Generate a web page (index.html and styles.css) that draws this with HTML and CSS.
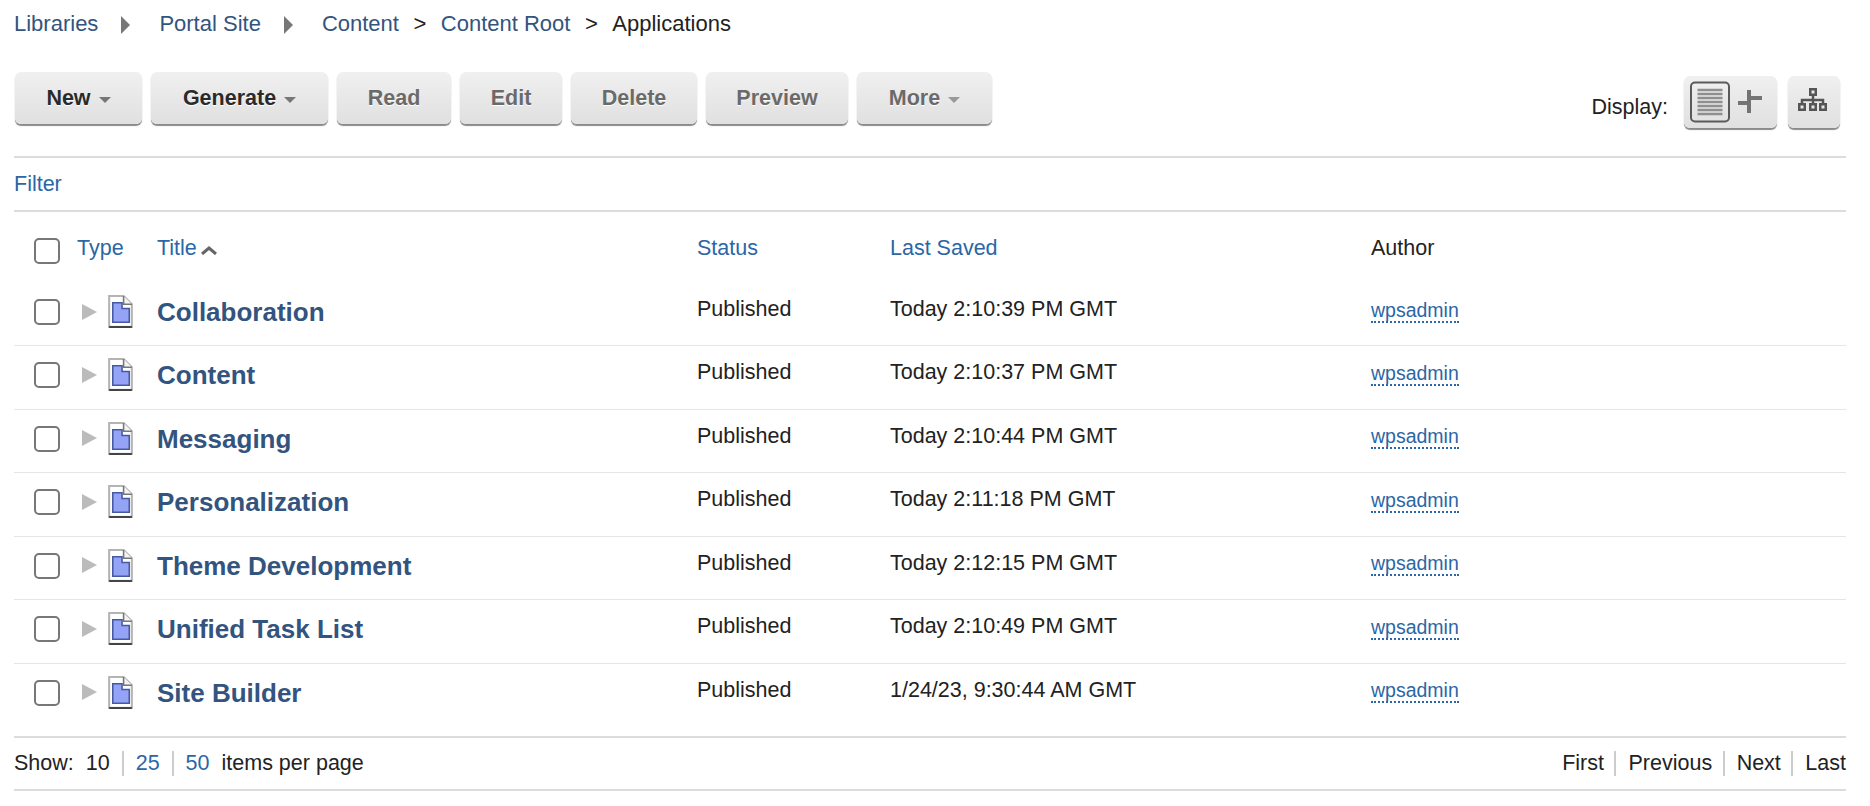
FILE: index.html
```html
<!DOCTYPE html>
<html lang="en">
<head>
<meta charset="UTF-8">
<meta name="viewport" content="width=device-width, initial-scale=1.0">
<title>Applications</title>
<link rel="stylesheet" href="styles.css">
</head>
<body>
<svg class="defs" width="0" height="0">
    <symbol id="doc" viewBox="0 0 24 32">
        <path d="M1 1H15L23 9V31H1Z" fill="#fff" stroke="#b4b4b4" stroke-width="2"/>
        <path d="M1 31H23" stroke="#444" stroke-width="2"/>
        <path d="M4.500 7.500H13.500V13H20.500V26.500H4.500Z" fill="#94a3f6" stroke="#465aa2" stroke-width="1.500"/>
        <path d="M15 1V9H23" fill="#f4f4f4" stroke="#777" stroke-width="1.500"/>
    </symbol>
</svg>

<div class="breadcrumb">
    <a href="#">Libraries</a><span class="crumb-arrow"></span>
    <a href="#">Portal Site</a><span class="crumb-arrow"></span>
    <a href="#">Content</a><span class="crumb-sep">&gt;</span>
    <a href="#">Content Root</a><span class="crumb-sep">&gt;</span>
    <span>Applications</span>
</div>

<div class="toolbar">
    <div class="actions">
        <button class="btn btn-new">New<span class="caret"></span></button>
        <button class="btn btn-generate">Generate<span class="caret"></span></button>
        <button class="btn off btn-read">Read</button>
        <button class="btn off btn-edit">Edit</button>
        <button class="btn off btn-delete">Delete</button>
        <button class="btn off btn-preview">Preview</button>
        <button class="btn off btn-more">More<span class="caret"></span></button>
    </div>
    <div class="display">
        <span class="display-label">Display:</span>
        <button class="btn btn-view">
            <svg width="93" height="52" viewBox="0 0 93 52">
                <rect x="7" y="6.500" width="38" height="39" rx="4" fill="none" stroke="#5a5a5a" stroke-width="2"/>
                <path d="M13.500 14H38.500M13.500 18H38.500M13.500 22H38.500M13.500 26H38.500M13.500 30H38.500M13.500 34H38.500M13.500 38H38.500" stroke="#8f8f8f" stroke-width="2.500"/>
                <path d="M54 27H65M65 22H78M65 14V37" stroke="#747474" stroke-width="4"/>
            </svg>
        </button>
        <button class="btn btn-tree">
            <svg width="52" height="52" viewBox="0 0 52 52">
                <rect x="22.250" y="13.250" width="5.500" height="5.500" fill="none" stroke="#555" stroke-width="2.500"/>
                <path d="M25 20V28M14 28V24H35V28" fill="none" stroke="#555" stroke-width="2.500"/>
                <rect x="11.250" y="28.250" width="5.500" height="5.500" fill="none" stroke="#555" stroke-width="2.500"/>
                <rect x="22.250" y="28.250" width="5.500" height="5.500" fill="none" stroke="#555" stroke-width="2.500"/>
                <rect x="32.250" y="28.250" width="5.500" height="5.500" fill="none" stroke="#555" stroke-width="2.500"/>
            </svg>
        </button>
    </div>
</div>

<div class="filter"><a href="#">Filter</a></div>

<table class="list">
    <colgroup>
        <col class="col-check">
        <col class="col-type">
        <col class="col-title">
        <col class="col-status">
        <col class="col-saved">
        <col>
    </colgroup>
    <thead>
        <tr>
            <th><input type="checkbox"></th>
            <th><a href="#">Type</a></th>
            <th><a href="#">Title</a><svg class="sort" width="18" height="9" viewBox="0 0 18 9"><path d="M2 8L9 2L16 8" fill="none" stroke="#666" stroke-width="3"/></svg></th>
            <th><a href="#">Status</a></th>
            <th><a href="#">Last Saved</a></th>
            <th>Author</th>
        </tr>
    </thead>
    <tbody>
        <tr>
            <td class="pick"><input type="checkbox"></td>
            <td class="type"><span class="twist"></span><svg class="doc" width="25" height="33"><use href="#doc"/></svg></td>
            <td class="name"><a href="#">Collaboration</a></td>
            <td>Published</td>
            <td>Today 2:10:39 PM GMT</td>
            <td class="owner"><a class="user" href="#">wpsadmin</a></td>
        </tr>
        <tr>
            <td class="pick"><input type="checkbox"></td>
            <td class="type"><span class="twist"></span><svg class="doc" width="25" height="33"><use href="#doc"/></svg></td>
            <td class="name"><a href="#">Content</a></td>
            <td>Published</td>
            <td>Today 2:10:37 PM GMT</td>
            <td class="owner"><a class="user" href="#">wpsadmin</a></td>
        </tr>
        <tr>
            <td class="pick"><input type="checkbox"></td>
            <td class="type"><span class="twist"></span><svg class="doc" width="25" height="33"><use href="#doc"/></svg></td>
            <td class="name"><a href="#">Messaging</a></td>
            <td>Published</td>
            <td>Today 2:10:44 PM GMT</td>
            <td class="owner"><a class="user" href="#">wpsadmin</a></td>
        </tr>
        <tr>
            <td class="pick"><input type="checkbox"></td>
            <td class="type"><span class="twist"></span><svg class="doc" width="25" height="33"><use href="#doc"/></svg></td>
            <td class="name"><a href="#">Personalization</a></td>
            <td>Published</td>
            <td>Today 2:11:18 PM GMT</td>
            <td class="owner"><a class="user" href="#">wpsadmin</a></td>
        </tr>
        <tr>
            <td class="pick"><input type="checkbox"></td>
            <td class="type"><span class="twist"></span><svg class="doc" width="25" height="33"><use href="#doc"/></svg></td>
            <td class="name"><a href="#">Theme Development</a></td>
            <td>Published</td>
            <td>Today 2:12:15 PM GMT</td>
            <td class="owner"><a class="user" href="#">wpsadmin</a></td>
        </tr>
        <tr>
            <td class="pick"><input type="checkbox"></td>
            <td class="type"><span class="twist"></span><svg class="doc" width="25" height="33"><use href="#doc"/></svg></td>
            <td class="name"><a href="#">Unified Task List</a></td>
            <td>Published</td>
            <td>Today 2:10:49 PM GMT</td>
            <td class="owner"><a class="user" href="#">wpsadmin</a></td>
        </tr>
        <tr>
            <td class="pick"><input type="checkbox"></td>
            <td class="type"><span class="twist"></span><svg class="doc" width="25" height="33"><use href="#doc"/></svg></td>
            <td class="name"><a href="#">Site Builder</a></td>
            <td>Published</td>
            <td>1/24/23, 9:30:44 AM GMT</td>
            <td class="owner"><a class="user" href="#">wpsadmin</a></td>
        </tr>
    </tbody>
</table>

<div class="pager">
    <div class="pager-side">
        <span class="show-label">Show:</span>
        <span class="pg">10</span>
        <a class="pg" href="#">25</a>
        <a class="pg" href="#">50</a>
        <span class="per-page">items per page</span>
    </div>
    <div class="pager-side pager-nav">
        <span class="pg">First</span>
        <span class="pg">Previous</span>
        <span class="pg">Next</span>
        <span class="pg">Last</span>
    </div>
</div>
</body>
</html>
```

FILE: styles.css
```css
body {
    font-family: "Liberation Sans", Arial, sans-serif;
    font-size: 21.5px;
    color: #222;
    background-color: #fff;
    margin: 0;
    padding: 0 24px 0 14px;
}

a {
    color: #2b66a6;
    text-decoration: none;
}

.defs {
    position: absolute;
}

.breadcrumb {
    display: flex;
    align-items: center;
    height: 47px;
    font-size: 22px;
}

.breadcrumb a {
    color: #33547e;
}

.crumb-arrow {
    width: 0;
    height: 0;
    margin: 2px 29px 0 23px;
    border-left: 9px solid #777;
    border-top: 9px solid transparent;
    border-bottom: 9px solid transparent;
}

.crumb-sep {
    margin: 0 14.5px;
    color: #222;
}

.toolbar {
    display: flex;
    justify-content: space-between;
    margin-top: 25px;
    height: 84px;
    border-bottom: 2px solid #dcdcdc;
}

.actions, .display {
    display: flex;
    align-items: flex-start;
    gap: 9px;
}

.actions {
    margin-left: 1px;
}

.btn {
    height: 52px;
    padding: 0;
    border: none;
    border-radius: 6px;
    background: linear-gradient(#f0f0f0, #e0e0e0);
    box-shadow: 0 2px 1px #8a8a8a;
    font-family: inherit;
    font-size: 21.5px;
    font-weight: bold;
    color: #2a2a2a;
    text-shadow: 0 1px 0 #fff;
}

.btn.off {
    color: #6a6a6a;
}

.btn-new { width: 127px; }
.btn-generate { width: 177px; }
.btn-read { width: 114px; }
.btn-edit { width: 102px; }
.btn-delete { width: 126px; }
.btn-preview { width: 142px; }
.btn-more { width: 135px; }

.caret {
    display: inline-block;
    margin-left: 8px;
    vertical-align: 2px;
    border-top: 6px solid #777;
    border-left: 6.5px solid transparent;
    border-right: 6.5px solid transparent;
}

.btn.off .caret {
    border-top-color: #999;
}

.display {
    margin-top: 4px;
    margin-right: 6px;
}

.display-label {
    margin: 19px 7px 0 0;
}

.btn-view { width: 93px; }
.btn-tree { width: 52px; margin-left: 2px; }

.btn svg {
    display: block;
}

.filter {
    height: 52px;
    line-height: 52px;
    border-bottom: 2px solid #dcdcdc;
}

.list {
    width: 100%;
    table-layout: fixed;
    border-collapse: collapse;
}

.col-check { width: 63px; }
.col-type { width: 80px; }
.col-title { width: 540px; }
.col-status { width: 193px; }
.col-saved { width: 481px; }

.list th {
    box-sizing: border-box;
    height: 71px;
    padding: 2px 0 0;
    text-align: left;
    font-weight: normal;
}

.list th input {
    margin-top: 5px;
}

.list td {
    box-sizing: border-box;
    height: 63.5px;
    padding: 14px 0 0;
    vertical-align: top;
    border-top: 1px solid #e6e6e6;
}

.list tbody tr:first-child td {
    height: 62.5px;
    border-top: none;
}

.list tbody tr:last-child td {
    height: 73px;
}

input[type="checkbox"] {
    appearance: none;
    display: block;
    width: 26px;
    height: 26px;
    margin: 0 0 0 20px;
    background-color: #fff;
    border: 2px solid #777;
    border-radius: 5px;
    box-sizing: border-box;
}

.list td.pick {
    padding-top: 16px;
}

.sort {
    margin-left: 3px;
}

.list td.type {
    padding-top: 12px;
    white-space: nowrap;
    line-height: 0;
}

.twist {
    display: inline-block;
    margin: 0 11px 0 5px;
    border-left: 15px solid #bbb;
    border-top: 8px solid transparent;
    border-bottom: 8px solid transparent;
    vertical-align: middle;
}

.doc {
    vertical-align: middle;
}

.name {
    font-size: 26px;
    font-weight: bold;
}

.name a {
    color: #33547e;
}

.list td.owner {
    padding-top: 14.5px;
}

.user {
    font-size: 19.5px;
    border-bottom: 2px dotted #2b66a6;
}

.pager {
    display: flex;
    justify-content: space-between;
    align-items: center;
    height: 51px;
    border-top: 2px solid #dcdcdc;
    border-bottom: 2px solid #dcdcdc;
}

.pager-side {
    display: flex;
    align-items: center;
}

.show-label {
    margin-right: 12px;
}

.pg {
    padding: 0 12px;
    line-height: 25px;
    border-left: 2px solid #ccc;
}

.show-label + .pg {
    padding-left: 0;
    border-left: none;
}

.pager-nav .pg {
    padding: 0 10.5px 0 12px;
}

.pager-nav .pg:first-child {
    border-left: none;
}

.pager-nav .pg:last-child {
    padding-right: 0;
}
```
